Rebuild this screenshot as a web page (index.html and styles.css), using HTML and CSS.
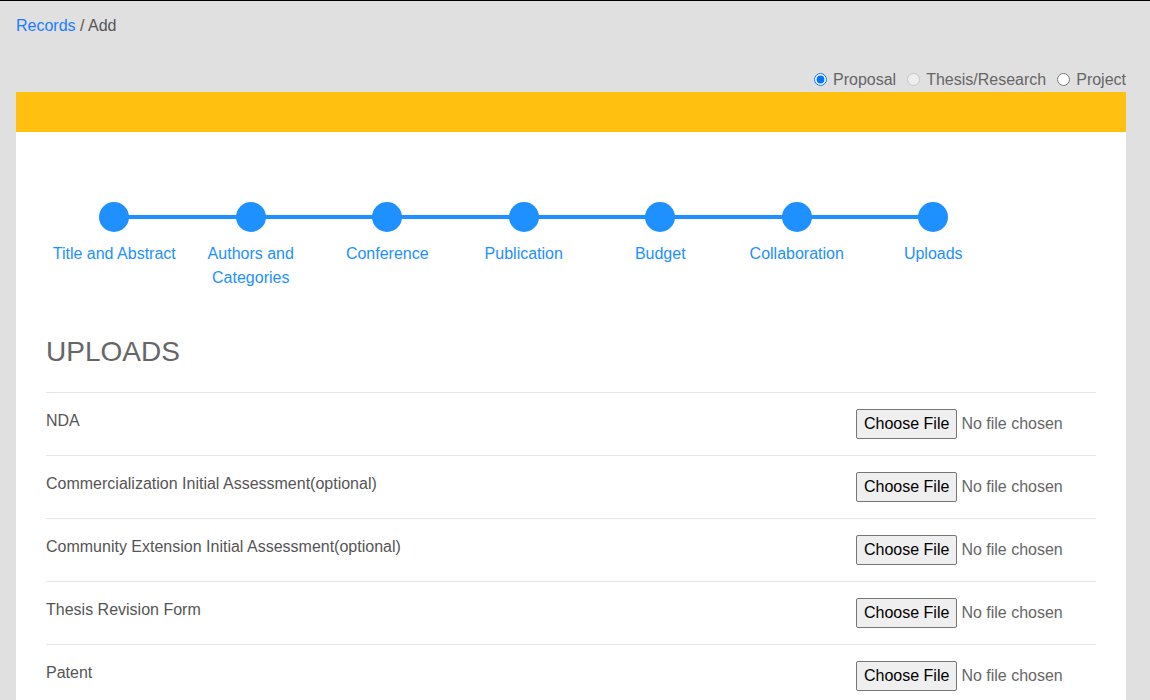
FILE: index.html
```html
<!DOCTYPE html>
<html>
<head>
<meta charset="utf-8">
<link rel="stylesheet" href="styles.css">
</head>
<body>
<div class="page">
  <nav class="crumbs"><a href="#" class="crumb-link">Records</a> / Add</nav>
  <div class="types">
    <label class="type"><input type="radio" name="type" checked> Proposal</label>
    <label class="type"><input type="radio" name="type" disabled> Thesis/Research</label>
    <label class="type"><input type="radio" name="type"> Project</label>
  </div>
  <div class="banner"></div>
  <div class="card">
    <div class="stepper">
      <div class="track"></div>
      <div class="step"><span class="dot"></span><span class="step-label">Title and Abstract</span></div>
      <div class="step"><span class="dot"></span><span class="step-label">Authors and Categories</span></div>
      <div class="step"><span class="dot"></span><span class="step-label">Conference</span></div>
      <div class="step"><span class="dot"></span><span class="step-label">Publication</span></div>
      <div class="step"><span class="dot"></span><span class="step-label">Budget</span></div>
      <div class="step"><span class="dot"></span><span class="step-label">Collaboration</span></div>
      <div class="step"><span class="dot"></span><span class="step-label">Uploads</span></div>
    </div>
    <h2 class="section-title">UPLOADS</h2>
    <div class="uploads">
      <div class="upload-row"><div class="upload-label">NDA</div><div class="upload-input"><input type="file"></div></div>
      <div class="upload-row"><div class="upload-label">Commercialization Initial Assessment(optional)</div><div class="upload-input"><input type="file"></div></div>
      <div class="upload-row"><div class="upload-label">Community Extension Initial Assessment(optional)</div><div class="upload-input"><input type="file"></div></div>
      <div class="upload-row"><div class="upload-label">Thesis Revision Form</div><div class="upload-input"><input type="file"></div></div>
      <div class="upload-row"><div class="upload-label">Patent</div><div class="upload-input"><input type="file"></div></div>
    </div>
  </div>
</div>
</body>
</html>
```

FILE: styles.css
```css
html, body {
  margin: 0;
  padding: 0;
  background: #e0e0e0;
  font-family: "Liberation Sans", Arial, sans-serif;
  font-size: 16px;
  line-height: 24px;
  color: #555;
  height: 100%;
  overflow: hidden;
}
.page {
  border-top: 1px solid #000;
  padding: 13px 24px 0 16px;
}
.crumbs {
  color: #555;
  height: 24px;
}
.crumb-link {
  color: #1a7cff;
  text-decoration: none;
}
.types {
  margin-top: 29px;
  height: 25px;
  display: flex;
  justify-content: flex-end;
  gap: 11px;
  color: #666;
}
.type {
  display: flex;
  align-items: center;
}
.type input {
  margin: 0 6px 0 0;
  width: 13px;
  height: 13px;
}
.banner {
  height: 40px;
  background: #ffc010;
}
.card {
  background: #fff;
  padding: 70px 30px 0 30px;
  height: 600px;
}
.stepper {
  position: relative;
  display: flex;
}
.track {
  position: absolute;
  top: 13px;
  height: 4px;
  left: 6.5%;
  width: 78%;
  background: #1e90ff;
}
.step {
  position: relative;
  width: 13%;
  flex: none;
  display: flex;
  flex-direction: column;
  align-items: center;
  text-align: center;
}
.dot {
  width: 30px;
  height: 30px;
  border-radius: 50%;
  background: #1e90ff;
}
.step-label {
  margin-top: 10px;
  color: #1e90ff;
}
.section-title {
  margin: 45px 0 23px;
  font-size: 28px;
  line-height: 33.6px;
  font-weight: normal;
  color: #666;
}
.upload-row {
  display: flex;
  align-items: flex-start;
  border-top: 1px solid #e5e5e5;
  padding: 16px 0 16px;
}
.upload-label {
  flex: 1;
}
.upload-input {
  width: 240px;
}
.upload-input input {
  font-family: "Liberation Sans", Arial, sans-serif;
  font-size: 16px;
  color: #666;
}
.upload-input input::file-selector-button {
  font-family: "Liberation Sans", Arial, sans-serif;
  font-size: 16px;
  color: #000;
  background: #efefef;
  border: 1px solid #767676;
  border-radius: 2px;
  padding: 5px 7px;
  margin-right: 4px;
}
```
